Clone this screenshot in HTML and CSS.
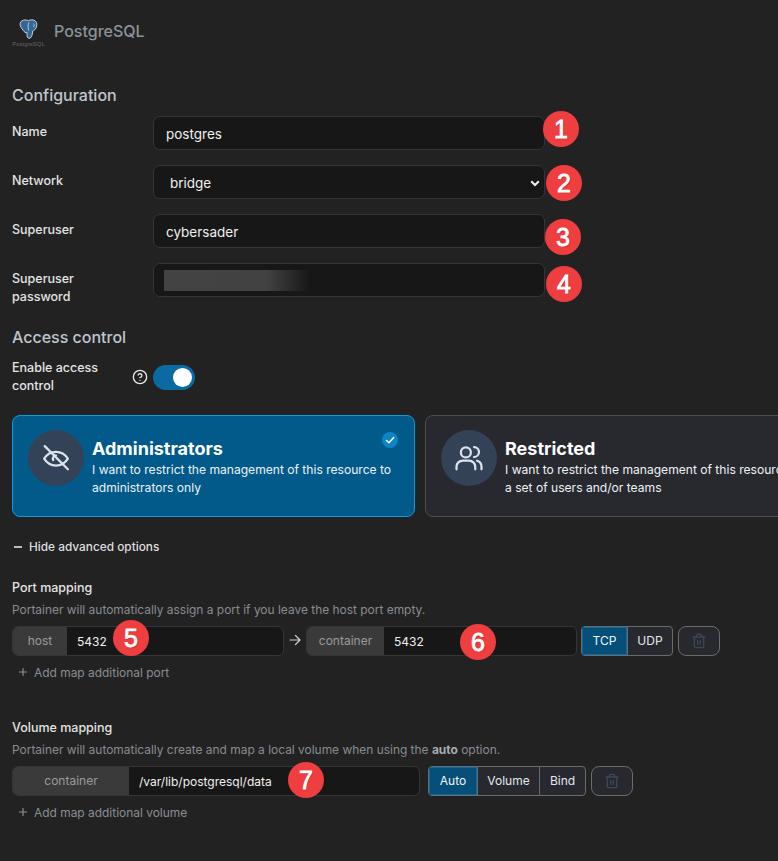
FILE: index.html
```html
<!DOCTYPE html>
<html lang="en">
  <head>
    <meta charset="UTF-8" />
    <meta name="viewport" content="width=device-width, initial-scale=1.0" />
    <title>PostgreSQL</title>
    <link rel="stylesheet" href="styles.css">
  </head>
  <body>
    <div class="page">
      <div class="app-header">
        <div class="logo">
          <svg class="logo-mark" width="30" height="22" viewBox="3 0 24 19.200">
            <path d="M9 1.500c2-1 4-.8 5.500 0 1.500-.9 4-1.300 6 .2 1.800 1.500 1.500 4 .7 6-.6 1.500-1.900 2.300-3 2.800-.2 2-.4 5-2.200 6.200-1.300.8-2.500-.5-2.700-2-.1-1 0-2 .1-2.800-1.300.6-2.500-.5-3.500-2-1.200-1.700-2.700-3.200-2.700-5.400 0-1.300.7-2.500 1.800-3z" fill="#336791" stroke="#d5dde5" stroke-width="0.800"/>
            <path d="M15 3c-1 2-1.200 4.500-.2 7M19 4c.6 1 .6 2-.1 3" fill="none" stroke="#d5dde5" stroke-width="0.700"/>
          </svg>
          <span class="logo-text">PostgreSQL</span>
        </div>
        <span class="app-title">PostgreSQL</span>
      </div>

      <h2 class="section-title config-title">Configuration</h2>

      <div class="form-row">
        <label class="field-label">Name</label>
        <input class="text-input" type="text" value="postgres">
      </div>
      <div class="form-row">
        <label class="field-label">Network</label>
        <div class="select-box">
          <span>bridge</span>
          <svg width="10" height="7" viewBox="0 0 10 7"><path d="M1.200 1.200 5 5l3.800-3.800" fill="none" stroke="#f0f0f0" stroke-width="2"/></svg>
        </div>
      </div>
      <div class="form-row">
        <label class="field-label">Superuser</label>
        <input class="text-input" type="text" value="cybersader">
      </div>
      <div class="form-row">
        <label class="field-label">Superuser password</label>
        <div class="password-box"><div class="password-blur"></div></div>
      </div>

      <h2 class="section-title access-title">Access control</h2>

      <div class="access-toggle">
        <label class="field-label toggle-label">Enable access control</label>
        <svg class="help-icon" width="16" height="16" viewBox="0 0 24 24" fill="none" stroke="#e8e8e8" stroke-width="2" stroke-linecap="round" stroke-linejoin="round">
          <circle cx="12" cy="12" r="10"/>
          <path d="M9.100 9a3 3 0 0 1 5.800 1c0 2-3 3-3 3"/>
          <path d="M12 17h.01"/>
        </svg>
        <div class="toggle"><div class="toggle-knob"></div></div>
      </div>

      <div class="box-selector">
        <div class="box-card box-card-active">
          <div class="box-icon">
            <svg width="30" height="30" viewBox="0 0 24 24" fill="none" stroke="#dbe4ee" stroke-width="1.800" stroke-linecap="round" stroke-linejoin="round">
              <path d="M2.500 12.500C5 8.500 8.300 7 12 7s7 1.500 9.500 5.500C19 16.500 15.700 18 12 18s-7-1.500-9.500-5.500z"/>
              <path d="M12 10a2.500 2.500 0 0 0-2.200 3.700"/>
              <path d="M3 2.500 21.500 21"/>
            </svg>
          </div>
          <div class="box-text">
            <div class="box-title">Administrators</div>
            <div class="box-desc">I want to restrict the management of this resource to administrators only</div>
          </div>
          <div class="box-check">
            <svg width="10" height="10" viewBox="0 0 10 10"><path d="M1.500 5.500 4 7.800l4.700-5.200" fill="none" stroke="#fff" stroke-width="1.500" stroke-linecap="round" stroke-linejoin="round"/></svg>
          </div>
        </div>
        <div class="box-card">
          <div class="box-icon">
            <svg width="30" height="30" viewBox="0 0 24 24" fill="none" stroke="#dbe4ee" stroke-width="1.800" stroke-linecap="round" stroke-linejoin="round">
              <circle cx="9.500" cy="7.500" r="4"/>
              <path d="M2 21v-2a5 5 0 0 1 5-5h5a5 5 0 0 1 5 5v2"/>
              <path d="M16 3.200a4 4 0 0 1 0 8"/>
              <path d="M22 21v-2a5 5 0 0 0-3.500-4.800"/>
            </svg>
          </div>
          <div class="box-text">
            <div class="box-title">Restricted</div>
            <div class="box-desc">I want to restrict the management of this resource to a set of users and/or teams</div>
          </div>
        </div>
      </div>

      <div class="advanced-toggle">
        <span class="minus-icon"></span>
        <span>Hide advanced options</span>
      </div>

      <div class="mapping-label port-label">Port mapping</div>
      <div class="mapping-desc">Portainer will automatically assign a port if you leave the host port empty.</div>
      <div class="map-row">
        <div class="input-group host-group">
          <span class="addon host-addon">host</span>
          <span class="addon-value">5432</span>
        </div>
        <svg class="arrow-icon" width="12" height="12" viewBox="0 0 12 12" fill="none" stroke="#d0d0d0" stroke-width="1.200" stroke-linecap="round" stroke-linejoin="round"><path d="M1 6h10M6.500 1.500 11 6l-4.500 4.500"/></svg>
        <div class="input-group port-group">
          <span class="addon port-addon">container</span>
          <span class="addon-value">5432</span>
        </div>
        <div class="btn-group tcp-group">
          <span class="seg seg-active seg-tcp">TCP</span>
          <span class="seg seg-udp">UDP</span>
        </div>
        <button class="trash-btn">
          <svg width="16" height="16" viewBox="0 0 24 24" fill="none" stroke="#3c4858" stroke-width="2" stroke-linecap="round" stroke-linejoin="round">
            <path d="M3 6h18M8 6V4a2 2 0 0 1 2-2h4a2 2 0 0 1 2 2v2M19 6v14a2 2 0 0 1-2 2H7a2 2 0 0 1-2-2V6M10 11v6M14 11v6"/>
          </svg>
        </button>
      </div>
      <div class="add-link port-add">
        <svg class="plus-icon" width="8" height="8" viewBox="0 0 8 8"><path d="M4 .5v7M.5 4h7" stroke="#8a8e94" stroke-width="1.200" stroke-linecap="round"/></svg>
        <span>Add map additional port</span>
      </div>

      <div class="mapping-label volume-label">Volume mapping</div>
      <div class="mapping-desc">Portainer will automatically create and map a local volume when using the <b>auto</b> option.</div>
      <div class="map-row">
        <div class="input-group volume-group">
          <span class="addon volume-addon">container</span>
          <span class="addon-value">/var/lib/postgresql/data</span>
        </div>
        <div class="btn-group volume-btns">
          <span class="seg seg-active seg-auto">Auto</span>
          <span class="seg seg-volume">Volume</span>
          <span class="seg seg-bind">Bind</span>
        </div>
        <button class="trash-btn volume-trash">
          <svg width="16" height="16" viewBox="0 0 24 24" fill="none" stroke="#3c4858" stroke-width="2" stroke-linecap="round" stroke-linejoin="round">
            <path d="M3 6h18M8 6V4a2 2 0 0 1 2-2h4a2 2 0 0 1 2 2v2M19 6v14a2 2 0 0 1-2 2H7a2 2 0 0 1-2-2V6M10 11v6M14 11v6"/>
          </svg>
        </button>
      </div>
      <div class="add-link volume-add">
        <svg class="plus-icon" width="8" height="8" viewBox="0 0 8 8"><path d="M4 .5v7M.5 4h7" stroke="#8a8e94" stroke-width="1.200" stroke-linecap="round"/></svg>
        <span>Add map additional volume</span>
      </div>

      <!-- numbered callouts drawn on top of the screenshot -->
      <div class="badge badge-1">1</div>
      <div class="badge badge-2">2</div>
      <div class="badge badge-3">3</div>
      <div class="badge badge-4">4</div>
      <div class="badge badge-5">5</div>
      <div class="badge badge-6">6</div>
      <div class="badge badge-7">7</div>
    </div>
  </body>
</html>
```
FILE: styles.css
```css
html, body {
  margin: 0;
  height: 861px;
  overflow: hidden;
}
body {
  background-color: #222222;
  color: #e6e6e6;
  font-family: Inter, "Liberation Sans", sans-serif;
  font-size: 12px;
}
.page {
  position: relative;
  width: 778px;
  height: 861px;
  overflow: hidden;
  box-sizing: border-box;
  padding-left: 12px;
}

/* header */
.app-header {
  display: flex;
  align-items: center;
  height: 32px;
  padding-top: 15px;
  margin-left: 1px;
}
.logo {
  width: 31px;
  height: 32px;
  display: flex;
  flex-direction: column;
  align-items: center;
}
.logo-mark {
  flex: none;
  margin-top: 4px;
}
.logo-text {
  font-family: "Liberation Sans", sans-serif;
  font-size: 6px;
  line-height: 6px;
  color: #666;
}
.app-title {
  margin-left: 10px;
  font-size: 16px;
  font-weight: 500;
  color: #8b929b;
}

.section-title {
  margin: 0;
  font-size: 16px;
  font-weight: 500;
  line-height: 20px;
  color: #bfc6cf;
}
.config-title {
  margin-top: 38px;
  margin-bottom: 11px;
}
.access-title {
  margin-top: 21px;
  margin-bottom: 12px;
}

/* form rows */
.form-row {
  display: flex;
  margin-bottom: 15px;
}
.field-label {
  display: block;
  width: 141px;
  box-sizing: border-box;
  padding-top: 7px;
  padding-right: 50px;
  font-size: 12.500px;
  font-weight: 500;
  line-height: 18px;
  color: #e4e4e4;
}
.text-input, .select-box, .password-box {
  width: 392px;
  height: 34px;
  box-sizing: border-box;
  background-color: #171717;
  border: 1px solid #353535;
  border-radius: 7px;
  color: #f0f0f0;
  font-family: Inter, "Liberation Sans", sans-serif;
  font-size: 13.500px;
  font-weight: 400;
  padding: 2px 12px 0;
}
.select-box {
  display: flex;
  align-items: center;
  justify-content: space-between;
  padding: 2px 4px 0 16px;
}
.password-box {
  padding: 6px 0 0 10px;
}
.password-blur {
  width: 146px;
  height: 21px;
  background: linear-gradient(to right, #434343 0%, #424242 70%, #171717 100%);
}

/* access control */
.access-toggle {
  display: flex;
  align-items: flex-start;
  height: 36px;
  margin-top: 2px;
  margin-bottom: 20px;
}
.toggle-label {
  width: 120px;
  padding-top: 0;
  padding-right: 15px;
}
.help-icon {
  margin-top: 10px;
  margin-left: 0;
}
.toggle {
  width: 42px;
  height: 25px;
  margin-left: 5px;
  margin-top: 6px;
  border-radius: 13px;
  background-color: #0a6aa1;
  position: relative;
}
.toggle-knob {
  position: absolute;
  top: 3px;
  right: 3px;
  width: 19px;
  height: 19px;
  border-radius: 50%;
  background-color: #fff;
}

/* box selector */
.box-selector {
  display: flex;
  gap: 10px;
  width: 900px;
}
.box-card {
  position: relative;
  flex: none;
  width: 403px;
  height: 102px;
  box-sizing: border-box;
  display: flex;
  padding: 14px 15px;
  background-color: #27292e;
  border: 1px solid #4a4f57;
  border-radius: 8px;
  color: #fff;
}
.box-card-active {
  background-color: #025a8a;
  border-color: #0d9ddb;
}
.box-icon {
  flex: none;
  width: 56px;
  height: 56px;
  border-radius: 50%;
  background-color: #344257;
  display: flex;
  align-items: center;
  justify-content: center;
}
.box-text {
  margin-left: 8px;
  width: 315px;
}
.box-title {
  font-size: 18px;
  font-weight: 700;
  line-height: 22px;
  margin-top: 8px;
}
.box-desc {
  font-size: 12.080px;
  line-height: 18px;
  margin-top: 1px;
  color: #edf2f6;
}
.box-card:not(.box-card-active) .box-text {
  width: 345px;
}
.box-check {
  position: absolute;
  top: 16px;
  right: 16px;
  width: 16px;
  height: 16px;
  border-radius: 50%;
  background-color: #0d84c8;
  display: flex;
  align-items: center;
  justify-content: center;
}

.advanced-toggle {
  display: flex;
  align-items: center;
  margin-top: 22px;
  height: 16px;
  font-size: 11.850px;
  font-weight: 500;
  color: #dedede;
}
.minus-icon {
  width: 8px;
  height: 1.500px;
  margin-left: 2px;
  margin-right: 7px;
  background-color: #bbb;
}

/* mapping sections */
.mapping-label {
  font-size: 12.500px;
  font-weight: 500;
  line-height: 18px;
  color: #e4e4e4;
}
.port-label {
  margin-top: 24px;
}
.volume-label {
  margin-top: 38px;
}
.mapping-desc {
  margin-top: 4px;
  font-size: 11.950px;
  line-height: 18px;
  color: #888c92;
}
.mapping-desc b {
  color: #a8acb2;
}
.map-row {
  display: flex;
  align-items: center;
  height: 30px;
  margin-top: 7px;
}
.input-group {
  display: flex;
  height: 30px;
  box-sizing: border-box;
  background-color: #171717;
  border: 1px solid #353535;
  border-radius: 6px;
  overflow: hidden;
}
.host-group { width: 272px; }
.port-group { width: 271px; }
.volume-group { width: 408px; }
.addon {
  display: flex;
  align-items: center;
  justify-content: center;
  box-sizing: border-box;
  padding-bottom: 2px;
  background-color: #3a3a3a;
  color: #9a9a9a;
  font-size: 12px;
}
.host-addon { width: 54px; }
.port-addon { width: 77px; }
.volume-addon { width: 116px; }
.addon-value {
  display: flex;
  align-items: center;
  padding-left: 10px;
  color: #f0f0f0;
  font-size: 12px;
  font-weight: 400;
  padding-top: 1px;
}
.arrow-icon {
  margin: 0 5px 2px 5px;
}
.btn-group {
  display: flex;
  height: 30px;
  margin-left: 4px;
  box-sizing: border-box;
  border: 1px solid #6b6b6b;
  border-radius: 4px;
  overflow: hidden;
  background-color: #27292e;
}
.volume-btns {
  margin-left: 8px;
}
.seg {
  display: flex;
  align-items: center;
  justify-content: center;
  box-sizing: border-box;
  padding-bottom: 1px;
  color: #e4e7ec;
  font-size: 12px;
  font-weight: 400;
  border-left: 1px solid #6b6b6b;
}
.seg-active {
  background-color: #064f78;
  border-left: 0;
  color: #f0f4f8;
}
.seg-tcp { width: 45px; }
.seg-udp { width: 45px; }
.seg-auto { width: 48px; }
.seg-volume { width: 62px; }
.seg-bind { width: 46px; }
.tcp-group .seg-active { box-shadow: inset 0 0 0 1px #0a6aa1; }
.volume-btns .seg-active { box-shadow: inset 0 0 0 1px #0a6aa1; }
.trash-btn {
  width: 42px;
  height: 30px;
  margin-left: 5px;
  padding: 0;
  display: flex;
  align-items: center;
  justify-content: center;
  background-color: #27292e;
  border: 1px solid #6b6b6b;
  border-radius: 8px;
}
.add-link {
  display: flex;
  align-items: center;
  height: 18px;
  margin-top: 7px;
  margin-left: 7px;
  color: #8a8e94;
  font-size: 11.950px;
  font-weight: 400;
}
.plus-icon {
  margin-right: 7px;
}

/* numbered callouts */
.badge {
  position: absolute;
  width: 36px;
  height: 36px;
  border-radius: 50%;
  background-color: #ef3e40;
  color: #fff;
  font-family: "Liberation Sans", sans-serif;
  font-size: 25px;
  font-weight: 400;
  -webkit-text-stroke: 0.8px #fff;
  line-height: 36px;
  text-align: center;
  text-shadow: 1px 1px 1px rgba(0, 0, 0, 0.25);
}
.badge-1 { left: 543px; top: 111px; }
.badge-2 { left: 546px; top: 165px; }
.badge-3 { left: 545px; top: 219px; }
.badge-4 { left: 546px; top: 266px; }
.badge-5 { left: 113px; top: 620px; }
.badge-6 { left: 460px; top: 624px; }
.badge-7 { left: 288px; top: 762px; }
```
